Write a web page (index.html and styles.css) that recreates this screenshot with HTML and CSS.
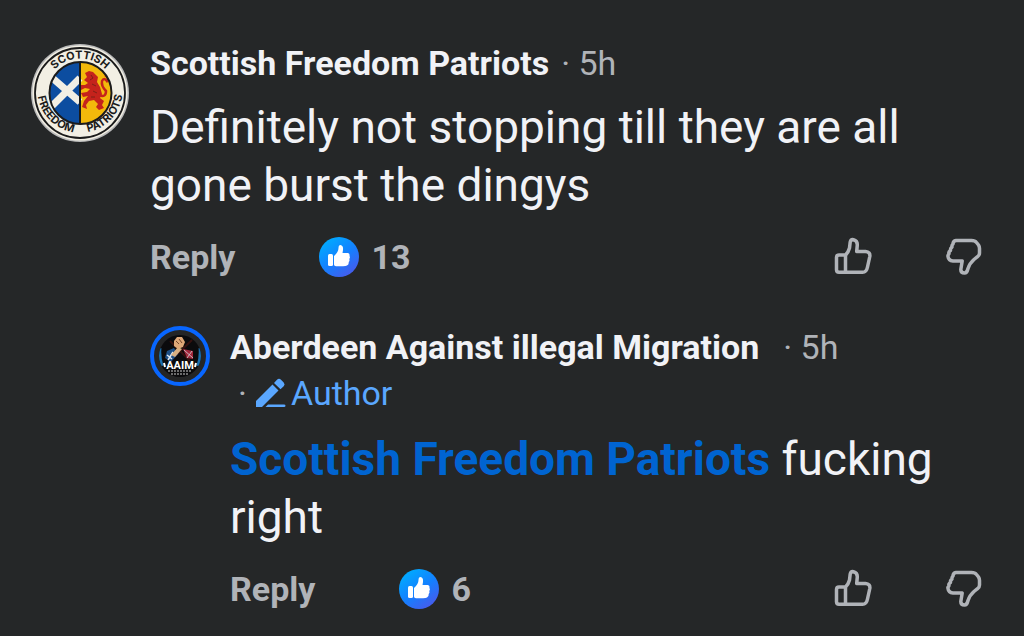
FILE: index.html
```html
<!DOCTYPE html>
<html lang="en">
<head>
  <meta charset="UTF-8" />
  <meta name="viewport" content="width=device-width, initial-scale=1.0"/>
  <title>Comments</title>
  <link rel="stylesheet" href="styles.css">
</head>
<body>

  <!-- Shared icons -->
  <svg class="icon-defs" aria-hidden="true">
    <defs>
      <linearGradient id="like-fill" x1="0.15" y1="0.1" x2="0.8" y2="1">
        <stop offset="0" stop-color="#00aaff"/>
        <stop offset="0.5" stop-color="#1480ff"/>
        <stop offset="1" stop-color="#4b58ea"/>
      </linearGradient>
      <symbol id="like-badge" viewBox="0 0 40 40">
        <circle cx="20" cy="20" r="20" fill="url(#like-fill)"/>
        <rect x="9" y="17" width="5" height="12" rx="1.5" fill="#fff"/>
        <path d="M15 19 Q19.500 15 19.500 11 Q19.500 8 21.500 8 Q24.500 8.500 24 13 L23.500 16 H29 Q31 16.500 30.500 19 Q31.500 20.500 30.300 22 Q31 24 29.700 25 Q30 27.500 28 28.500 Q27 29.200 24 29.200 H17 Q15 29.200 15 27.500 Z" fill="#fff"/>
      </symbol>
      <symbol id="thumb-up" viewBox="0 0 40 40">
        <path d="M4.500 20.500 Q4.500 18 7 18 H13.500 Q16.500 15 17.500 11 L18.200 5 Q18.800 2.200 21.500 2.700 Q25.500 3.700 25.300 8 L24.700 14.500 H33.500 Q38.500 15 37.800 19.500 L35.500 30 Q34.500 35.300 30.500 35.300 H7 Q4.500 35.300 4.500 32.800 Z M13.500 18 V35.300"/>
      </symbol>
      <symbol id="thumb-down" viewBox="0 0 40 40">
        <path d="M12 3.500 H27.500 Q31 3.500 32.500 5.500 L34.500 8 Q35.500 9.500 35.500 11.500 V16 Q35.500 18.500 33.500 19.700 L30 22.500 Q25.500 26.500 24 31.500 Q23 36 20.500 36 Q16.800 36 16.800 32.500 L18.200 24 H9 Q4.500 23.500 4 19.500 Q3.700 18 5 16.700 Q4.300 15 6.500 13.500 Q6 11.500 8 10 Q7.500 8.500 9 7 Q9 4 12 3.500 Z"/>
      </symbol>
    </defs>
  </svg>

  <main class="comments">
    <article class="comment">
      <svg class="avatar" viewBox="0 0 98 98" role="img" aria-label="Scottish Freedom Patriots">
        <defs>
          <path id="arc-top" d="M14.500 49 A34.500 34.500 0 0 1 83.500 49"/>
          <path id="arc-bottom" d="M6.300 46 A42.700 42.700 0 1 0 91.700 46"/>
          <clipPath id="shield"><circle cx="49.500" cy="49" r="31"/></clipPath>
        </defs>
        <circle cx="49" cy="49" r="49" fill="#bbb"/>
        <circle cx="49" cy="49" r="47.500" fill="#f2efe4"/>
        <circle cx="49" cy="49" r="45" fill="none" stroke="#1b1b1b" stroke-width="1.800"/>
        <g clip-path="url(#shield)">
          <rect x="18" y="18" width="31" height="62" fill="#0c4da0"/>
          <rect x="49" y="18" width="32" height="62" fill="#f3b90b"/>
          <path d="M19 32 L49 58 M19 64 L49 34" stroke="#f2efe4" stroke-width="7"/>
          <path d="M54 29 L58 27 L62 28 L67 33 L66 38 L69 43 L71 50 L69 54 L73 57 L71 61 L73 64 L68 66 L65 63 L67 60 L63 56 L58 57 L55 61 L56 65 L51 63 L53 57 L57 52 L52 53 L50 49 L56 48 L59 45 L54 44 L50 46 L49 41 L54 41 L57 39 L53 36 L56 33 Z" fill="#c5231c"/>
          <path d="M68 51 Q75 54 75 47 Q70 42 71 37 Q73 33 76 37 Q79 34 74 31" fill="none" stroke="#c5231c" stroke-width="2.500"/>
          <path d="M60 31 L62 34 L59 36 M61 40 L65 42 M62 47 L66 49 M60 53 L64 53" fill="none" stroke="#7e2016" stroke-width="1"/>
          <path d="M49 18 V80" stroke="#1b1b1b" stroke-width="2"/>
        </g>
        <circle cx="49.500" cy="49" r="31" fill="none" stroke="#1b1b1b" stroke-width="2"/>
        <g class="badge-text">
          <text><textPath href="#arc-top" startOffset="50%" text-anchor="middle">SCOTTISH</textPath></text>
          <text><textPath href="#arc-bottom" startOffset="25%" text-anchor="middle">FREEDOM</textPath></text>
          <text><textPath href="#arc-bottom" startOffset="76%" text-anchor="middle">PATRIOTS</textPath></text>
        </g>
      </svg>

      <div class="content">
        <header class="meta">
          <h2 class="name">Scottish Freedom Patriots</h2>
          <span class="time">· 5h</span>
        </header>
        <p class="text">Definitely not stopping till they are all gone burst the dingys</p>
        <div class="actions">
          <button type="button" class="reply-button">Reply</button>
          <span class="likes"><svg class="like-icon" aria-hidden="true"><use href="#like-badge"/></svg>13</span>
          <button type="button" class="vote" aria-label="Like"><svg><use href="#thumb-up"/></svg></button>
          <button type="button" class="vote" aria-label="Dislike"><svg><use href="#thumb-down"/></svg></button>
        </div>

        <article class="comment reply">
          <svg class="avatar" viewBox="0 0 60 60" role="img" aria-label="Aberdeen Against illegal Migration">
            <defs>
              <clipPath id="photo"><circle cx="30" cy="30" r="21"/></clipPath>
            </defs>
            <circle cx="30" cy="30" r="28" fill="#242526" stroke="#0866ff" stroke-width="4"/>
            <g clip-path="url(#photo)">
              <rect x="9" y="9" width="42" height="42" fill="#0b0b0d"/>
              <path d="M10 22 Q9 30 12 40 M50 22 Q51 30 48 40" fill="none" stroke="#1b6fae" stroke-width="3"/>
              <path d="M20 15 L40 35 M42 14 L23 32" stroke="#35110f" stroke-width="2"/>
              <path d="M17 25 L24 22 L28 28 L21 36 L15 32 Z" fill="#1d4f87"/>
              <path d="M17 29 L22 33 M18 34 L23 26" stroke="#dce5ee" stroke-width="1.500"/>
              <path d="M33 23 L43 25 L43 33 L37 32 Z" fill="#a3263a"/>
              <path d="M34 24 L43 32 M42 25 L37 32" stroke="#c9b4bc" stroke-width="1"/>
              <path d="M21 29 L28 21 L32 23 L25 31 Z" fill="#d8b083"/>
              <path d="M24 15 L27 11 L32 11 L35 16 L33 21 L28 23 L24 20 Z" fill="#dfa878"/>
              <path d="M26 15 L29 18 M29 13 L32 17" stroke="#75452c" stroke-width="1"/>
            </g>
            <text class="group-text" x="30" y="43" text-anchor="middle">AAIM</text>
            <path d="M14 37 L15 41 M46 37 L45 41" stroke="#fff" stroke-width="2"/>
            <path d="M18 45 H42 M21 48 H38" stroke="#ccc" stroke-width="1" stroke-dasharray="2 1"/>
          </svg>

          <div class="content">
            <header class="meta">
              <h2 class="name">Aberdeen Against illegal Migration</h2>
              <span class="time">· 5h</span>
              <span class="author">
                <span class="dot">·</span>
                <svg class="pen" viewBox="0 0 30 30" aria-hidden="true">
                  <path d="M0 29 V23 L16.500 6.500 L22.500 12.500 L6 29 Z M18 5 L21 1.700 Q23 0 25 1.700 L27.700 4.500 Q29.500 6.500 27.700 8.300 L24.500 11.300 Z M12 26.500 H28 Q29.500 26.500 29.500 27.800 Q29.500 29 28 29 H9.500 Z"/>
                </svg>Author
              </span>
            </header>
            <p class="text"><a href="#">Scottish Freedom Patriots</a> fucking right</p>
            <div class="actions">
              <button type="button" class="reply-button">Reply</button>
              <span class="likes"><svg class="like-icon" aria-hidden="true"><use href="#like-badge"/></svg>6</span>
              <button type="button" class="vote" aria-label="Like"><svg><use href="#thumb-up"/></svg></button>
              <button type="button" class="vote" aria-label="Dislike"><svg><use href="#thumb-down"/></svg></button>
            </div>
          </div>
        </article>
      </div>
    </article>
  </main>

</body>
</html>
```
FILE: styles.css
```css
* {
  box-sizing: border-box;
  margin: 0;
  padding: 0;
}

body {
  background-color: #252728;
  color: #f1f2f6;
  font-family: Roboto, Arial, sans-serif;
  font-size: 34px;
}

.icon-defs {
  display: block;
  width: 0;
  height: 0;
}

.comments {
  padding: 40px 40px 20px 31px;
}

.comment {
  display: flex;
  align-items: flex-start;
  gap: 21px;
}

.comment.reply {
  margin-top: 47px;
  gap: 20px;
}

.avatar {
  flex: none;
  width: 98px;
  height: 98px;
  margin-top: 4px;
}

.reply .avatar {
  width: 60px;
  height: 60px;
  margin-top: 2px;
}

.badge-text {
  font-size: 11px;
  font-family: Inter, sans-serif;
  font-weight: bold;
  fill: #1b1b1b;
}

.group-text {
  font-size: 11px;
  font-weight: bold;
  fill: #fff;
}

.content {
  flex: 1;
  min-width: 0;
}

.meta {
  display: flex;
  flex-wrap: wrap;
  column-gap: 12px;
  line-height: 46px;
}

.reply .meta {
  column-gap: 24px;
}

.name {
  font-size: 34px;
  font-weight: bold;
}

.time {
  color: #b0b3b8;
}

.author {
  display: flex;
  align-items: center;
  padding-left: 8px;
  color: #5aa7ff;
}

.dot {
  color: #b0b3b8;
}

.pen {
  width: 30px;
  height: 30px;
  margin: 0 5px 0 9px;
  fill: #5aa7ff;
}

.text {
  margin-top: 12px;
  font-size: 46px;
  line-height: 58px;
}

.reply .text {
  margin-top: 14px;
}

.text a {
  color: #0064d1;
  font-weight: bold;
  text-decoration: none;
}

.actions {
  display: flex;
  align-items: center;
  height: 40px;
  margin-top: 23px;
  color: #b0b3b8;
  font-weight: bold;
}

button {
  border: none;
  background: none;
  color: inherit;
  font: inherit;
  cursor: pointer;
}

.likes {
  display: flex;
  align-items: center;
  gap: 12px;
  margin: 0 auto 0 84px;
}

.like-icon {
  width: 40px;
  height: 40px;
}

.vote {
  height: 40px;
  margin-left: 72px;
}

.vote svg {
  display: block;
  width: 40px;
  height: 40px;
  fill: none;
  stroke: #b0b3b8;
  stroke-width: 3.5;
  stroke-linejoin: round;
}
```
